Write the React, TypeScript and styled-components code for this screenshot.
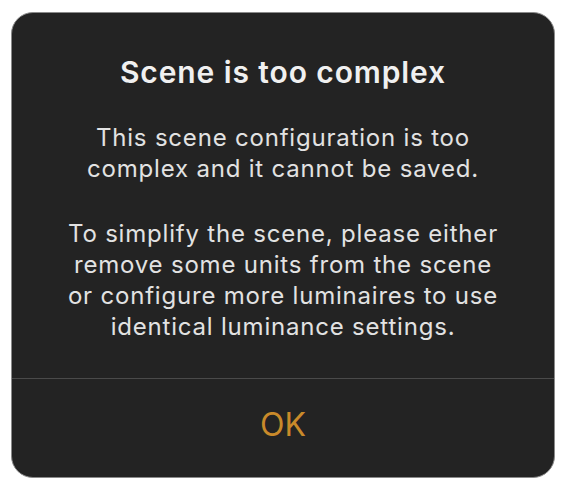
import styled, { createGlobalStyle } from 'styled-components';

const GlobalStyle = createGlobalStyle`
  html, body {
    margin: 0;
    padding: 0;
    background: #ffffff;
  }
  body {
    font-family: Inter, "Liberation Sans", sans-serif;
  }
`;

const Page = styled.div`
  width: 568px;
  height: 491px;
  padding: 12px 13px 13px 11px;
  box-sizing: border-box;
`;

const Dialog = styled.div`
  display: flex;
  flex-direction: column;
  height: 100%;
  background-color: #232323;
  border: 1px solid #8a8a8a;
  border-radius: 22px;
  box-sizing: border-box;
  overflow: hidden;
`;

const Content = styled.div`
  display: flex;
  flex-direction: column;
  align-items: center;
  padding: 41px 10px 36px;
  text-align: center;
  color: #e2e2e2;
`;

const Title = styled.h2`
  margin: 0 0 32px;
  font-size: 30px;
  line-height: 36px;
  font-weight: 600;
  letter-spacing: 0.9px;
  color: #f0f0f0;
  white-space: nowrap;
`;

const Message = styled.p`
  margin: 0;
  font-size: 24px;
  line-height: 31px;
  font-weight: 400;
  letter-spacing: 0.8px;
  white-space: nowrap;

  & + & {
    margin-top: 34px;
  }
`;

const Divider = styled.div`
  height: 1px;
  background-color: #4a4a4a;
`;

const ActionButton = styled.button`
  flex: 1;
  border: none;
  padding: 0 0 8px;
  background: transparent;
  color: #c98a2a;
  font-family: inherit;
  font-size: 32px;
  font-weight: 400;
  cursor: pointer;
`;

export default function App() {
  return (
    <Page>
      <GlobalStyle />
      <Dialog>
        <Content>
          <Title>Scene is too complex</Title>
          <Message>
            This scene configuration is too
            <br />
            complex and it cannot be saved.
          </Message>
          <Message>
            To simplify the scene, please either
            <br />
            remove some units from the scene
            <br />
            or configure more luminaires to use
            <br />
            identical luminance settings.
          </Message>
        </Content>
        <Divider />
        <ActionButton>OK</ActionButton>
      </Dialog>
    </Page>
  );
}
